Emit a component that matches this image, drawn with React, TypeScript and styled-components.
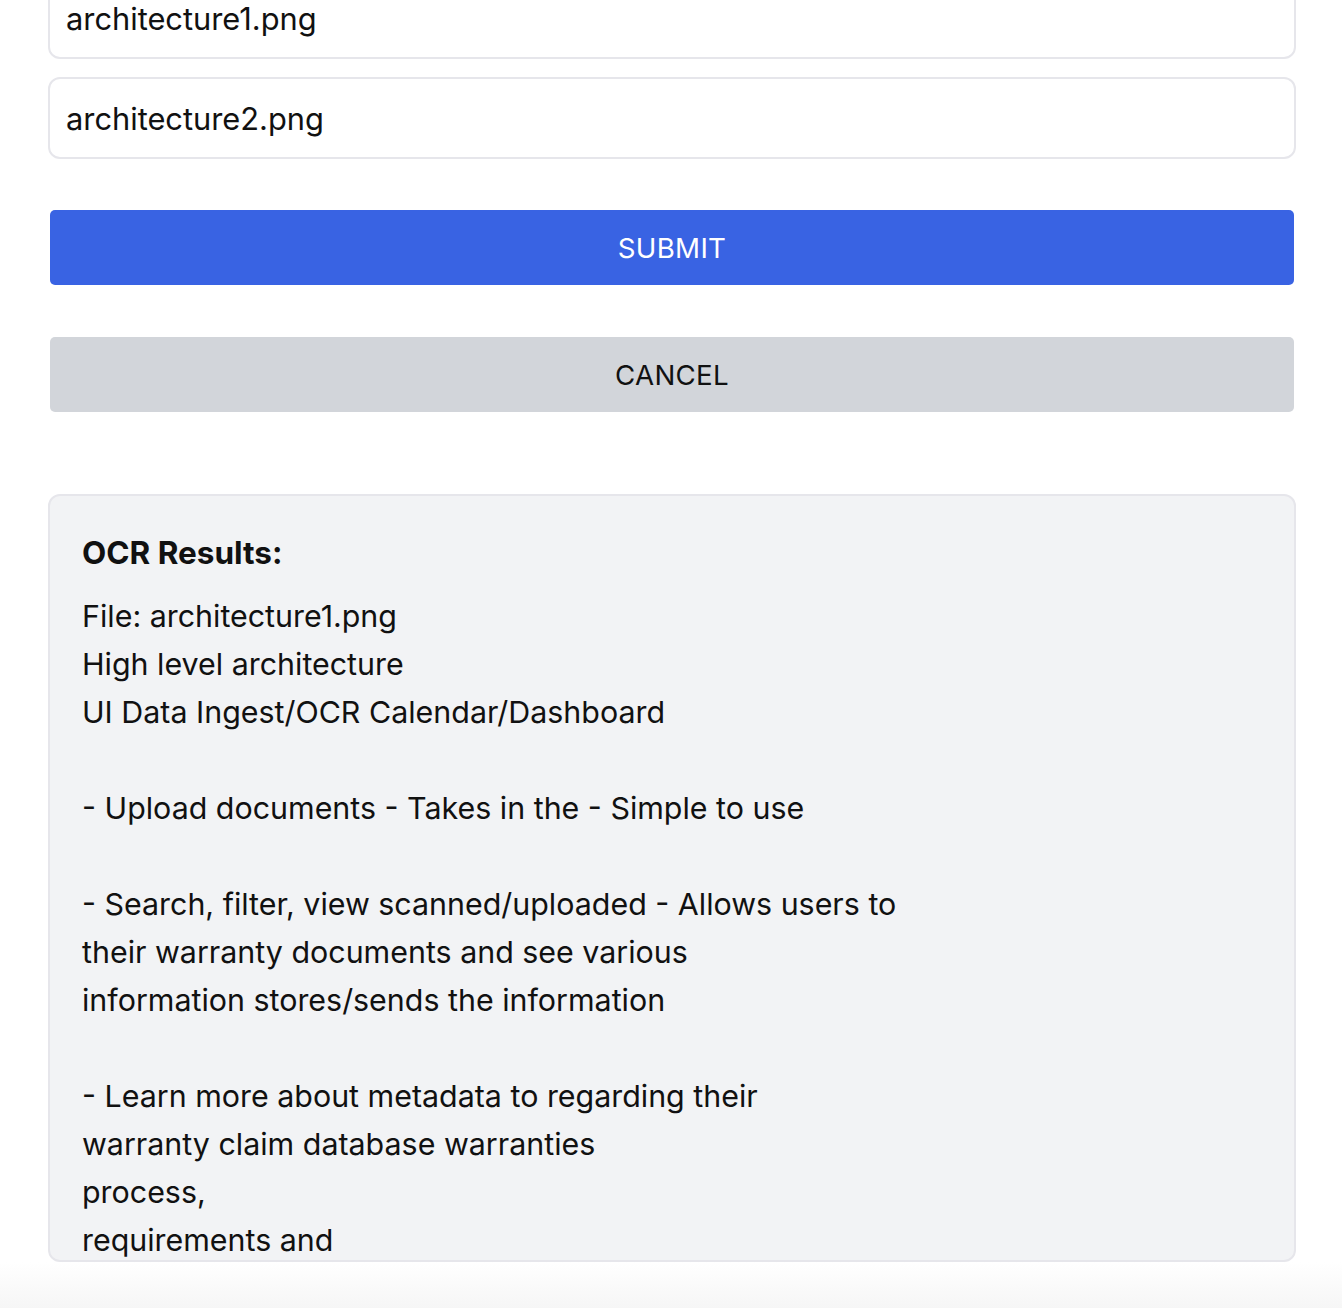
import React from "react";
import styled, { createGlobalStyle } from "styled-components";

const Global = createGlobalStyle`
  html, body { margin: 0; padding: 0; background: #ffffff; }
  body { font-family: Inter, "Noto Sans", "Liberation Sans", sans-serif; color: #111111; }
  * { box-sizing: border-box; }
`;

const Page = styled.div`
  height: 1308px;
  background: linear-gradient(to bottom, #ffffff 0, #ffffff 1262px, #f6f6f6 1308px);
  overflow: hidden;
`;

const Form = styled.div`
  width: 1248px;
  margin: -23px 0 0 48px;
  display: flex;
  flex-direction: column;
`;

const FileField = styled.div`
  height: 82px;
  border: 2px solid #e6e6eb;
  border-radius: 12px;
  background: #fff;
  display: flex;
  align-items: center;
  padding: 0 16px;
  font-size: 30.8px;
  color: #111;
  & + & { margin-top: 18px; }
`;

const Button = styled.button<{ $variant: "primary" | "secondary" }>`
  margin: 0 2px;
  height: 75px;
  border: none;
  border-radius: 5px;
  font-family: inherit;
  font-size: 27.7px;
  letter-spacing: 0.3px;
  padding-top: 2px;
  background: ${(p) => (p.$variant === "primary" ? "#3963e3" : "#d2d5da")};
  color: ${(p) => (p.$variant === "primary" ? "#ffffff" : "#111111")};
  margin-top: ${(p) => (p.$variant === "primary" ? "51px" : "52px")};
`;

const Results = styled.div`
  margin-top: 82px;
  height: 768px;
  overflow: hidden;
  background: #f2f3f5;
  border: 2px solid #e6e6eb;
  border-radius: 12px;
  padding: 37px 32px 0;
`;

const Heading = styled.h3`
  margin: 0 0 19px;
  font-size: 31.5px;
  font-weight: 700;
  line-height: 40px;
`;

const Body = styled.pre`
  margin: 0;
  font-family: inherit;
  font-size: 30.4px;
  line-height: 48px;
  white-space: pre-wrap;
  color: #111;
`;

const ocrText = `File: architecture1.png
High level architecture
UI Data Ingest/OCR Calendar/Dashboard

- Upload documents - Takes in the - Simple to use

- Search, filter, view scanned/uploaded - Allows users to
their warranty documents and see various
information stores/sends the information

- Learn more about metadata to regarding their
warranty claim database warranties
process,
requirements and
`;

export default function App() {
  return (
    <Page>
      <Global />
      <Form>
        <FileField>architecture1.png</FileField>
        <FileField>architecture2.png</FileField>
        <Button $variant="primary">SUBMIT</Button>
        <Button $variant="secondary">CANCEL</Button>
        <Results>
          <Heading>OCR Results:</Heading>
          <Body>{ocrText}</Body>
        </Results>
      </Form>
    </Page>
  );
}
